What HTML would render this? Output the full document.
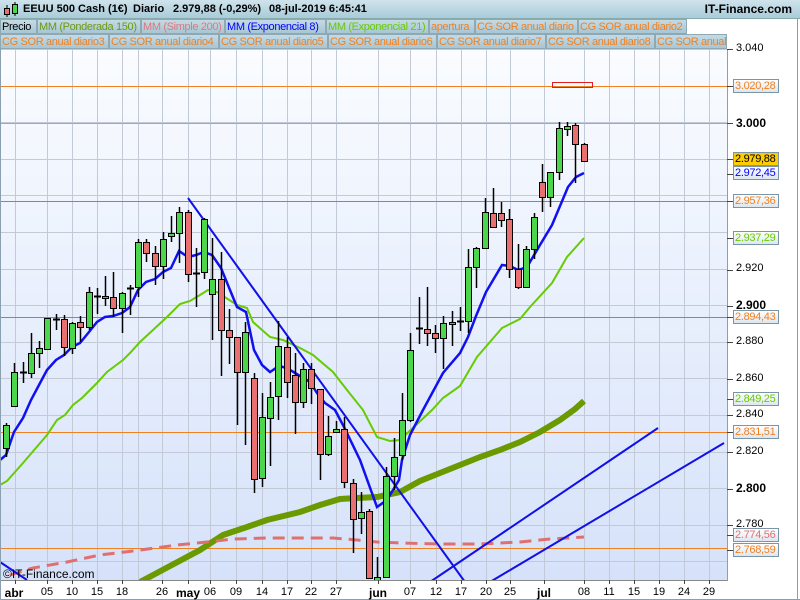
<!DOCTYPE html>
<html><head><meta charset="utf-8"><style>
*{margin:0;padding:0;box-sizing:border-box}
body{width:800px;height:600px;overflow:hidden;background:#fff;font-family:"Liberation Sans",sans-serif;position:relative}
#top{position:absolute;left:0;top:0;width:800px;height:19px;background:linear-gradient(#cfe3ec,#a9cbd9);border-bottom:1px solid #8aa;}
#top span{position:absolute;top:3px;font-size:11px;font-weight:bold;color:#000;white-space:nowrap}
#top .r{right:8px;left:auto;font-size:12px;top:2px}
.row{position:absolute;left:0;height:15px;font-size:11px;white-space:nowrap;letter-spacing:-0.35px}
.tab{position:absolute;top:0;height:15px;line-height:14px;padding-left:1px;background:linear-gradient(#c4dbe6,#a8c6d4);border:1px solid #8ea8b4;overflow:hidden}
.ax{position:absolute;font-size:11px;color:#000}
.lb{position:absolute;left:733px;width:46px;height:14px;font-size:11px;line-height:12px;padding-left:1px;letter-spacing:-0.3px;border:1px solid #7a95a5;background:linear-gradient(#ffffff,#dde6f0);white-space:nowrap}
.d{position:absolute;top:586px;font-size:11px;transform:translateX(-50%)}
.b{font-weight:bold;font-size:12px}
</style></head><body>
<div id="top"><svg style="position:absolute;left:3px;top:2px" width="18" height="16"><line x1="4" y1="3" x2="4" y2="15" stroke="#000"/><rect x="1.5" y="6.5" width="5" height="6" fill="#e87070" stroke="#000"/><line x1="12" y1="0" x2="12" y2="14" stroke="#000"/><rect x="9.5" y="2.5" width="5" height="9" fill="#4cd64c" stroke="#000"/></svg><span style="left:23px">EEUU 500 Cash (1€)</span><span style="left:133px">Diario</span><span style="left:173px">2.979,88 (-0,29%)</span><span style="left:269px">08-jul-2019 6:45:41</span><span class="r">IT-Finance.com</span></div>
<div class="row" style="top:19px;width:727px">
<div class="tab" style="left:0;width:37px;color:#000">Precio</div>
<div class="tab" style="left:37px;width:104px;color:#6a9a10">MM (Ponderada 150)</div>
<div class="tab" style="left:141px;width:84px;color:#e07878">MM (Simple 200)</div>
<div class="tab" style="left:225px;width:101px;color:#0000ff">MM (Exponencial 8)</div>
<div class="tab" style="left:326px;width:103px;color:#66cc00">MM (Exponencial 21)</div>
<div class="tab" style="left:429px;width:46px;color:#f08020">apertura</div>
<div class="tab" style="left:475px;width:103px;color:#f08020">CG SOR anual diario</div>
<div class="tab" style="left:578px;width:109px;color:#f08020">CG SOR anual diario2</div>
</div>
<div class="row" style="top:34px;width:727px">
<div class="tab" style="left:0;width:109px;color:#f08020">CG SOR anual diario3</div>
<div class="tab" style="left:109px;width:110px;color:#f08020">CG SOR anual diario4</div>
<div class="tab" style="left:219px;width:109px;color:#f08020">CG SOR anual diario5</div>
<div class="tab" style="left:328px;width:109px;color:#f08020">CG SOR anual diario6</div>
<div class="tab" style="left:437px;width:109px;color:#f08020">CG SOR anual diario7</div>
<div class="tab" style="left:546px;width:109px;color:#f08020">CG SOR anual diario8</div>
<div class="tab" style="left:655px;width:72px;color:#f08020">CG SOR anual</div>
</div>
<svg id="ch" style="position:absolute;left:0;top:0" width="800" height="600">
<defs><linearGradient id="bg" x1="0" y1="0" x2="0" y2="1"><stop offset="0" stop-color="#fafcff"/><stop offset="1" stop-color="#d6e2fa"/></linearGradient></defs>
<rect x="0" y="49" width="727" height="531" fill="url(#bg)"/>
<g id="grid" stroke="#c2cad8" stroke-width="1"></g>
<g id="hl" stroke="#f08020" stroke-width="1">
<line x1="0" y1="86.5" x2="727" y2="86.5"/><line x1="0" y1="201.5" x2="727" y2="201.5" stroke="#a08070"/><line x1="0" y1="317.5" x2="727" y2="317.5" stroke="#a08070"/><line x1="0" y1="432.5" x2="727" y2="432.5"/><line x1="0" y1="548.5" x2="727" y2="548.5"/><line x1="0" y1="123.5" x2="727" y2="123.5" stroke="#c0a090"/>
</g>
<rect x="552.5" y="82.5" width="40" height="5" fill="none" stroke="#e02020"/>
<polyline fill="none" stroke="#6a9a00" stroke-width="6" points="140,582 170,566 200,550 223,535 247,527 267,520 300,512 320,505 340,499 357,498 377,497 400,492 420,481 440,473 460,465 480,457 500,450 520,442 540,432 560,420 575,409 584,401"/>
<polyline fill="none" stroke="#e07070" stroke-width="3" stroke-dasharray="12,7" points="10,575 33,568 67,562 100,555 133,551 177,545 207,542 233,539 267,538 300,538 333,538 357,540 377,542 400,543 440,544 480,544 520,542 550,539 584,537"/>
<polyline fill="none" stroke="#66cc00" stroke-width="2" points="0,485 7,481 23,463 47,435 57,420 65,415 73,405 82,398 97,383 107,372 123,360 130,353 140,342 153,330 167,317 180,304 190,301 200,295 208,290 217,292 237,305 247,308 253,322 270,337 283,340 300,348 313,355 333,372 347,390 363,410 377,437 390,441 400,440 432,410 443,398 460,386 477,357 502,328 520,319 530,307 552,283 567,257 584,238"/>
<polyline fill="none" stroke="#1010f0" stroke-width="2.5" points="0,460 6,455 14,432 23,418 31,400 39,385 47,370 56,360 64,355 72,347 80,343 89,332 97,322 105,317 113,316 122,313 130,307 138,290 146,282 155,279 163,272 171,268 179,251 188,257 196,255 204,252 212,255 221,268 230,290 237,307 246,312 254,350 262,365 270,372 279,366 287,368 300,376 310,382 317,393 325,403 335,410 344,427 360,460 377,507 387,500 399,480 402,460 410,435 423,410 443,373 460,353 468,337 476,316 486,292 502,265 510,266 518,270 527,267 540,245 552,225 568,187 576,177 584,173"/>
<g stroke="#1010e8" stroke-width="2" fill="none">
<line x1="188" y1="198" x2="465" y2="582"/>
<line x1="0" y1="562" x2="27" y2="580"/>
<line x1="430" y1="582" x2="658" y2="428"/>
<line x1="490" y1="582" x2="724" y2="443"/>
</g>
<g id="cd"></g>
<rect x="0" y="580" width="800" height="20" fill="#fff"/>
<line x1="0" y1="580.5" x2="727" y2="580.5" stroke="#888"/>
<line x1="727.5" y1="49" x2="727.5" y2="581" stroke="#8aa0b0"/>
<line x1="797.5" y1="19" x2="797.5" y2="600" stroke="#8aa0b0"/>
<line x1="0.5" y1="49" x2="0.5" y2="600" stroke="#8aa0b0"/>
<line x1="0" y1="599.5" x2="800" y2="599.5" stroke="#8aa0b0"/>
<g id="ticks" stroke="#444"></g>
</svg>
<div class="ax" style="left:3px;top:567px;font-size:12px">©IT-Finance.com</div>
<div class="ax" style="left:736px;top:42px">3.040</div>
<div class="ax b" style="left:736px;top:116px">3.000</div>
<div class="ax" style="left:736px;top:262px">2.920</div>
<div class="ax b" style="left:736px;top:298px">2.900</div>
<div class="ax" style="left:736px;top:335px">2.880</div>
<div class="ax" style="left:736px;top:372px">2.860</div>
<div class="ax" style="left:736px;top:408px">2.840</div>
<div class="ax" style="left:736px;top:445px">2.820</div>
<div class="ax b" style="left:736px;top:481px">2.800</div>
<div class="ax" style="left:736px;top:518px">2.780</div>
<div class="lb" style="top:79px;color:#f08020">3.020,28</div>
<div class="lb" style="top:152px;color:#000;background:#ffcc00">2.979,88</div>
<div class="lb" style="top:166px;color:#0000ff">2.972,45</div>
<div class="lb" style="top:194px;color:#f08020">2.957,36</div>
<div class="lb" style="top:231px;color:#66cc00">2.937,29</div>
<div class="lb" style="top:310px;color:#f08020">2.894,43</div>
<div class="lb" style="top:392px;color:#66cc00">2.849,25</div>
<div class="lb" style="top:425px;color:#f08020">2.831,51</div>
<div class="lb" style="top:528px;color:#e07070">2.774,56</div>
<div class="lb" style="top:543px;color:#f08020">2.768,59</div>
<div class="d b" style="left:14px">abr</div><div class="d" style="left:47px">05</div><div class="d" style="left:72px">10</div><div class="d" style="left:97px">15</div><div class="d" style="left:122px">18</div><div class="d" style="left:162px">26</div><div class="d b" style="left:188px">may</div><div class="d" style="left:210px">06</div><div class="d" style="left:236px">09</div><div class="d" style="left:262px">14</div><div class="d" style="left:287px">17</div><div class="d" style="left:311px">22</div><div class="d" style="left:336px">27</div><div class="d b" style="left:378px">jun</div><div class="d" style="left:410px">07</div><div class="d" style="left:436px">12</div><div class="d" style="left:461px">17</div><div class="d" style="left:486px">20</div><div class="d" style="left:510px">25</div><div class="d b" style="left:544px">jul</div><div class="d" style="left:584px">08</div><div class="d" style="left:609px">11</div><div class="d" style="left:634px">15</div><div class="d" style="left:659px">19</div><div class="d" style="left:684px">24</div><div class="d" style="left:709px">29</div>
<script>
var NS="http://www.w3.org/2000/svg";
function el(p,t,a){var e=document.createElementNS(NS,t);for(var k in a)e.setAttribute(k,a[k]);p.appendChild(e);return e;}
var g=document.getElementById('grid');
[15,47,72,97,122,138,162,188,210,236,262,287,311,336,378,410,436,461,486,510,544,584,609,634,659,684,709].forEach(function(x){el(g,'line',{x1:x+.5,y1:49,x2:x+.5,y2:580});});
for(var y=49;y<580;y+=36.6){el(g,'line',{x1:0,y1:Math.round(y)+.5,x2:727,y2:Math.round(y)+.5});}
var t=document.getElementById('ticks');
[49,86,123,159,174,201,238,270,306,317,342,379,399,415,432,452,489,525,535,550].forEach(function(y){el(t,'line',{x1:727,y1:y+.5,x2:733,y2:y+.5});});
[15,47,72,97,122,162,188,210,236,262,287,311,336,378,410,436,461,486,510,544,584,609,634,659,684,709].forEach(function(x){el(t,'line',{x1:x+.5,y1:580,x2:x+.5,y2:584});});
var C=[[6,425,448,423,457,'g'],[14,372,406,363,407,'g'],[23,372,372,362,383,'d'],[31,353,373,333,378,'g'],[39,348,353,341,368,'g'],[47,318,349,318,349,'g'],[56,319,319,314,330,'d'],[64,319,347,315,356,'r'],[72,323,348,322,354,'g'],[80,322,327,316,342,'r'],[89,292,327,287,330,'g'],[97,296,296,288,314,'d'],[105,296,298,276,306,'r'],[113,297,308,272,317,'r'],[122,293,308,292,333,'g'],[130,288,288,285,315,'d'],[138,242,287,239,297,'g'],[146,242,253,239,262,'r'],[155,253,266,246,285,'r'],[163,239,266,232,279,'g'],[171,233,236,216,242,'g'],[179,212,233,207,263,'g'],[188,212,274,210,282,'r'],[196,273,273,248,307,'d'],[204,219,272,218,279,'g'],[212,279,294,238,340,'g'],[221,279,330,252,376,'r'],[229,330,337,309,364,'r'],[237,337,372,337,425,'r'],[245,332,372,322,445,'g'],[254,378,479,373,493,'r'],[262,417,478,393,487,'g'],[270,397,418,382,466,'g'],[278,346,396,321,420,'g'],[287,347,382,337,398,'r'],[295,375,402,353,434,'r'],[303,369,402,363,408,'g'],[311,369,388,363,404,'r'],[320,389,454,389,480,'r'],[328,436,454,416,456,'g'],[336,429,432,421,432,'g'],[344,429,482,417,488,'r'],[353,483,519,479,553,'r'],[361,512,518,492,534,'g'],[369,511,578,509,579,'r'],[377,577,580,557,580,'g'],[386,476,577,467,578,'g'],[394,457,476,438,490,'g'],[402,420,455,393,460,'g'],[410,350,420,333,422,'g'],[419,328,328,297,344,'d'],[427,329,333,287,346,'r'],[435,333,338,325,353,'r'],[443,323,338,316,369,'g'],[452,322,324,311,346,'r'],[460,321,321,307,331,'d'],[468,267,321,249,333,'g'],[476,248,267,247,288,'g'],[485,212,248,198,249,'g'],[493,213,227,188,228,'r'],[501,213,220,202,227,'r'],[509,219,269,209,278,'r'],[518,269,287,244,289,'r'],[526,249,287,246,287,'g'],[534,217,249,213,259,'g'],[542,182,197,164,212,'r'],[550,172,197,172,207,'g'],[559,128,172,122,180,'g'],[567,126,129,122,136,'g'],[575,125,144,123,183,'r'],[584,144,161,143,161,'r']];
var cd=document.getElementById('cd');
C.forEach(function(c){var x=c[0];el(cd,'line',{x1:x+.5,y1:c[3],x2:x+.5,y2:c[4],stroke:'#000','stroke-width':1.5});
if(c[5]=='d'){el(cd,'line',{x1:x-3,y1:c[1]+.5,x2:x+4,y2:c[1]+.5,stroke:'#000','stroke-width':2});}
else{el(cd,'rect',{x:x-2.5,y:c[1]+.5,width:6,height:Math.max(c[2]-c[1],2),fill:c[5]=='g'?'#4cd64c':'#e87070',stroke:'#000','stroke-width':1});}});
</script>
</body></html>
